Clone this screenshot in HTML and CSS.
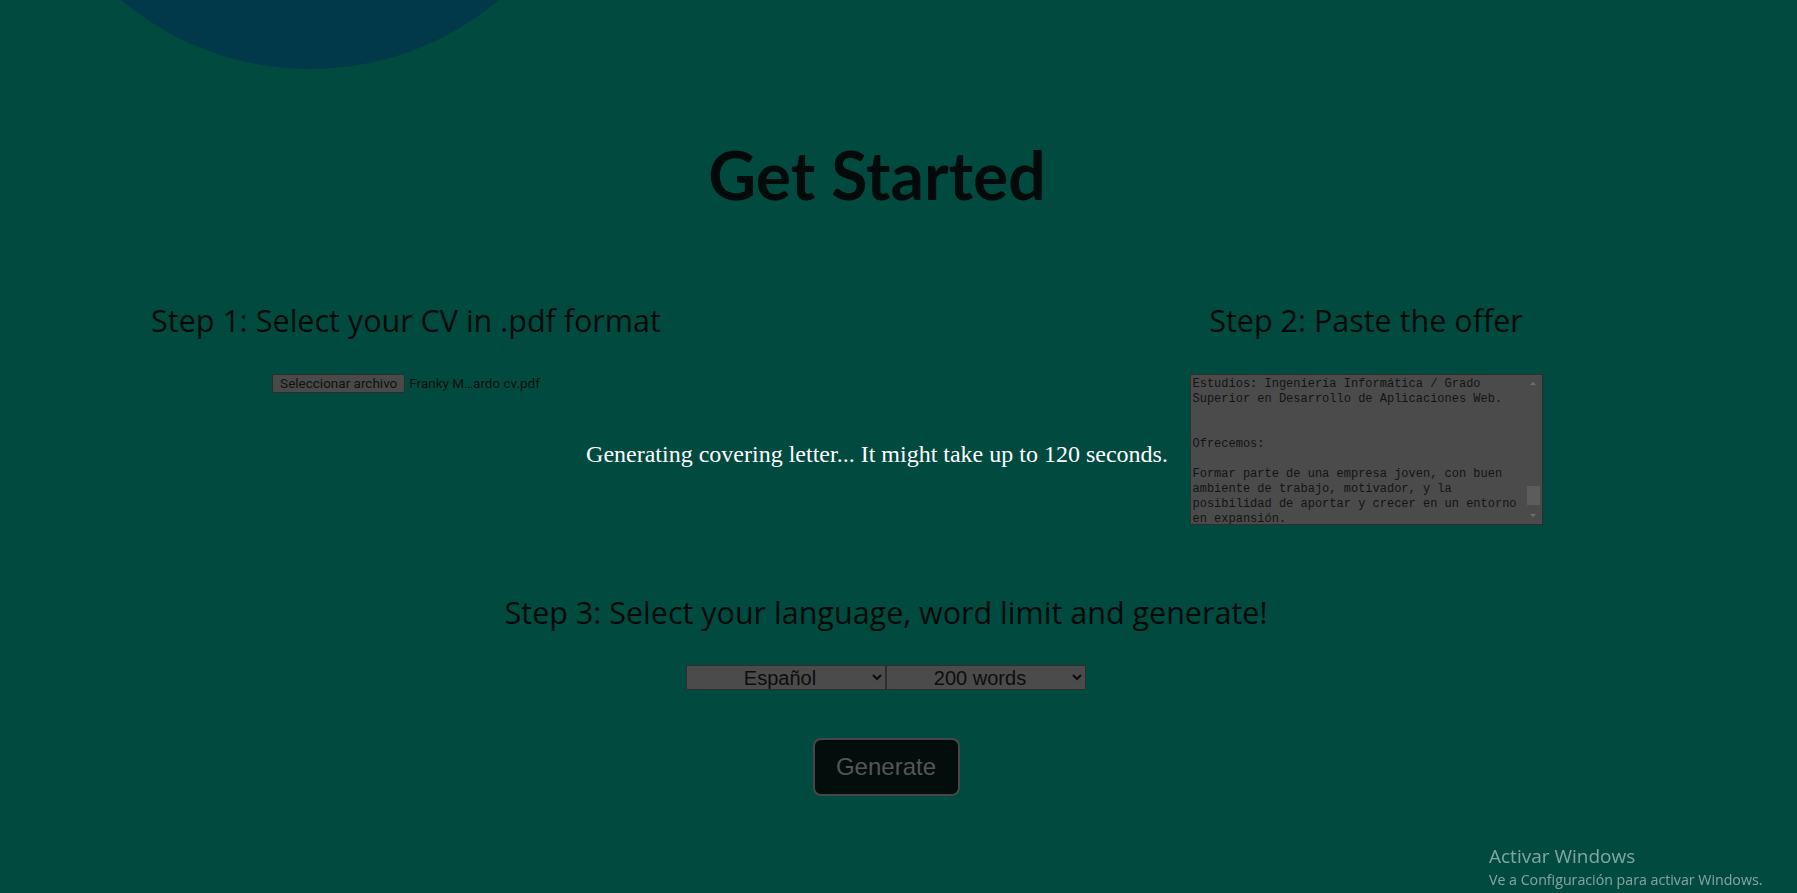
FILE: index.html
```html
<!DOCTYPE html>
<html lang="es">
<head>
<meta charset="utf-8">
<title>Get Started</title>
<link rel="stylesheet" href="styles.css">
</head>
<body>
<div class="blob"></div>
<main class="page">
  <h1 class="title">Get Started</h1>
  <section class="steps">
    <div class="step">
      <h2 class="step-title">Step 1: Select your CV in .pdf format</h2>
      <div class="file-field">
        <label class="file-btn">Seleccionar archivo<input type="file" accept=".pdf" class="file-input"></label>
        <span class="file-name">Franky M…ardo cv.pdf</span>
      </div>
    </div>
    <p class="loading">Generating covering letter... It might take up to 120 seconds.</p>
    <div class="step">
      <h2 class="step-title">Step 2: Paste the offer</h2>
      <div class="offer-box">
        <textarea class="offer" id="offer" spellcheck="false">Desarrollador/a Web Junior
Madrid (híbrido)

Sobre nosotros:

Somos una startup tecnológica dedicada al
desarrollo de soluciones digitales para
empresas del sector retail y logística.

Nuestro equipo está formado por más de 30
profesionales apasionados por la tecnología,
el diseño y la mejora continua.

Descripción del puesto:

Buscamos una persona con ganas de aprender
que se incorpore a nuestro equipo de
desarrollo para participar en la creación
y mantenimiento de aplicaciones web.

Funciones:

- Desarrollo de interfaces con React.
- Maquetación con HTML5 y CSS3.
- Integración con APIs REST.
- Mantenimiento de aplicaciones existentes.
- Participación en revisiones de código.
- Colaboración con el equipo de diseño.

Requisitos:

- Conocimientos de JavaScript y TypeScript.
- Experiencia con React o similares.
- Conocimientos básicos de Node.js.
- Manejo de Git y control de versiones.
- Conocimientos de bases de datos SQL.
- Nivel de inglés intermedio.

Se valorará:

- Experiencia previa en proyectos reales.
- Conocimientos de testing (Jest, Cypress).
- Portfolio o repositorio en GitHub.

Estudios: Ingeniería Informática / Grado Superior en Desarrollo de Aplicaciones Web.


Ofrecemos:

Formar parte de una empresa joven, con buen ambiente de trabajo, motivador, y la posibilidad de aportar y crecer en un entorno en expansión.
- Contrato indefinido.
- Horario flexible y teletrabajo parcial.</textarea>
        <div class="scrollbar" aria-hidden="true">
          <span class="sb-arrow sb-up"></span>
          <span class="sb-track"><span class="sb-thumb"></span></span>
          <span class="sb-arrow sb-down"></span>
        </div>
      </div>
    </div>
  </section>
  <section class="generate">
    <h2 class="step-title">Step 3: Select your language, word limit and generate!</h2>
    <div class="selects">
      <select class="choice" aria-label="Language">
        <option>Español</option>
        <option>English</option>
        <option>Français</option>
      </select>
      <select class="choice" aria-label="Word limit">
        <option>100 words</option>
        <option selected>200 words</option>
        <option>300 words</option>
      </select>
    </div>
    <button class="gen-btn" type="button">Generate</button>
  </section>
</main>
<div class="watermark">
  <div class="wm-title">Activar Windows</div>
  <div class="wm-sub">Ve a Configuración para activar Windows.</div>
</div>
<script src="script.js"></script>
</body>
</html>
```

FILE: styles.css
```css
* { box-sizing: border-box; }

html, body {
  margin: 0;
  height: 100%;
}

body {
  position: relative;
  overflow: hidden;
  background: #004a3f;
  color: #040a09;
  font-family: "Open Sans", "Noto Sans", sans-serif;
}

.blob {
  position: absolute;
  left: 17px;
  top: -517px;
  width: 586px;
  height: 586px;
  border-radius: 50%;
  background: #01394a;
}

.page {
  position: relative;
  width: 1772px;
  padding-top: 142px;
  text-align: center;
}

.title {
  margin: 0;
  padding-right: 18px;
  font-family: "Lato", "Open Sans", sans-serif;
  font-size: 66px;
  font-weight: 700;
  line-height: 1;
}

.steps {
  display: grid;
  grid-template-columns: repeat(3, 480px);
  justify-content: center;
  margin-top: 97px;
}

.step {
  display: flex;
  flex-direction: column;
  align-items: center;
}

.step-title {
  margin: 0;
  font-size: 30.5px;
  font-weight: 400;
  line-height: 1;
  white-space: nowrap;
}

.file-field {
  display: flex;
  align-items: center;
  gap: 4px;
  margin-top: 38px;
  font-family: "Roboto", "Liberation Sans", sans-serif;
  font-size: 13.5px;
}

.file-btn {
  display: inline-block;
  height: 19px;
  padding: 0 7px;
  line-height: 17px;
  background: #4a4a4a;
  border: 1px solid #2c2c2c;
  border-radius: 2px;
  color: #111;
}

.file-input { display: none; }

.file-name { color: #0b0f0e; }

.loading {
  justify-self: center;
  margin: 137px 18px 0 0;
  color: #ffffff;
  font-family: "Liberation Serif", "Times New Roman", serif;
  font-size: 24px;
  line-height: 1;
  white-space: nowrap;
}

.offer-box {
  position: relative;
  width: 353px;
  height: 151px;
  margin-top: 38px;
}

.offer {
  display: block;
  width: 100%;
  height: 100%;
  margin: 0;
  padding: 2px 19px 1px 2px;
  overflow: hidden;
  background: #4b4b4b;
  border: 1px solid #2e2e2e;
  color: #141414;
  font-family: "Liberation Mono", monospace;
  font-size: 12px;
  line-height: 15px;
  resize: none;
  outline: none;
}

.scrollbar {
  position: absolute;
  top: 1px;
  right: 1px;
  bottom: 1px;
  width: 17px;
  display: flex;
  flex-direction: column;
  background: #4b4b4b;
}

.sb-arrow {
  display: flex;
  align-items: center;
  justify-content: center;
  height: 17px;
}

.sb-arrow::before {
  content: "";
  border-left: 3px solid transparent;
  border-right: 3px solid transparent;
}

.sb-up::before { border-bottom: 3px solid #6e6e6e; }
.sb-down::before { border-top: 3px solid #6e6e6e; }

.sb-track {
  flex: 1;
  display: flex;
  flex-direction: column;
  justify-content: flex-end;
  padding: 0 2px 2px;
}

.sb-thumb {
  height: 19px;
  background: #5c5c5c;
}

.generate {
  display: flex;
  flex-direction: column;
  align-items: center;
  margin-top: 72px;
}

.selects {
  display: flex;
  margin-top: 38px;
}

.choice {
  width: 200px;
  height: 25px;
  padding: 0 4px;
  background-color: #4b4b4b;
  border: 1px solid #2e2e2e;
  color: #0d0d0d;
  font-family: "Liberation Sans", Arial, sans-serif;
  font-size: 20px;
  text-align: center;
  text-align-last: center;
}

.gen-btn {
  width: 147px;
  height: 58px;
  margin-top: 48px;
  background: #030d0c;
  border: 2px solid #474747;
  border-radius: 8px;
  color: #555555;
  font-family: "Liberation Sans", Arial, sans-serif;
  font-size: 24px;
}

.watermark {
  position: fixed;
  left: 1489px;
  top: 847px;
  color: rgba(255, 255, 255, 0.5);
  font-family: "Open Sans", "Noto Sans", sans-serif;
  line-height: 1;
}

.wm-title { font-size: 19px; }

.wm-sub {
  margin-top: 7px;
  font-size: 14.2px;
}
```

FILE: script.js
```js
const offer = document.getElementById('offer');
const text = offer.value;
const linesBefore = text.slice(0, text.indexOf('Estudios:')).split('\n').length - 1;
offer.scrollTop = linesBefore * 15;
```
